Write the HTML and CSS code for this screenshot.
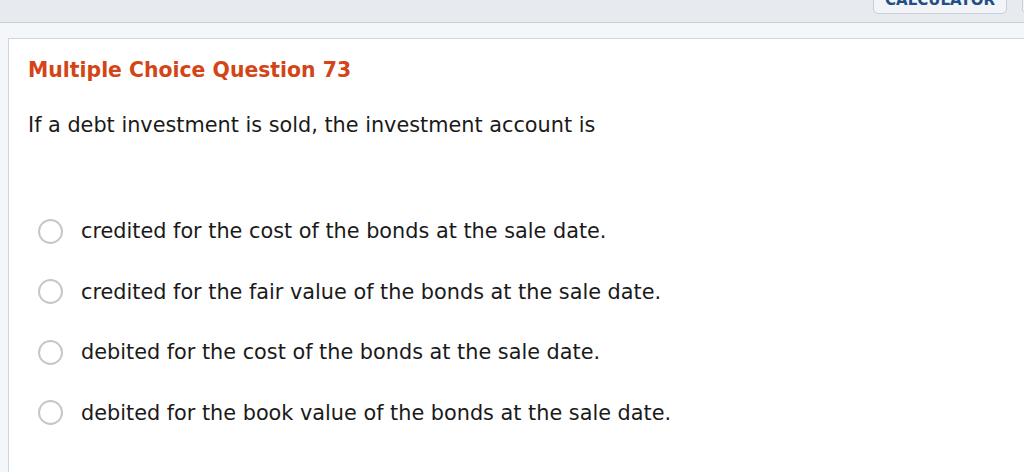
FILE: index.html
```html
<html>
<head>
	<title>Multiple Choice Question 73</title>
	<link rel="stylesheet" href="styles.css">
</head>
<body>
<div class="topbar">
	<span class="tool">CALCULATOR</span>
	<span class="tool"></span>
</div>
<div class="strip">
<div class="panel">
	<h2 class="qtitle">Multiple Choice Question 73</h2>
	<p class="prompt">If a debt investment is sold, the investment account is</p>
	<ul class="choices">
		<li><span class="radio"></span><span>credited for the cost of the bonds at the sale date.</span></li>
		<li><span class="radio"></span><span>credited for the fair value of the bonds at the sale date.</span></li>
		<li><span class="radio"></span><span>debited for the cost of the bonds at the sale date.</span></li>
		<li><span class="radio"></span><span>debited for the book value of the bonds at the sale date.</span></li>
	</ul>
</div>
</div>
</body>
</html>
```

FILE: styles.css
```css
body {
	margin: 0;
	background-color: #f4f7fa;
	font-family: "DejaVu Sans", Verdana, sans-serif;
	color: #1a1a1a;
	overflow: hidden;
}
div, p, ul, h1, h2, h3 { margin: 0; padding: 0; }

.topbar {
	height: 22px;
	background-color: #e7ebef;
	border-bottom: 1px solid #c9d0d8;
	display: flex;
	gap: 15px;
	padding-left: 873px;
	overflow: hidden;
}
.tool {
	flex: none;
	width: 134px;
	height: 25px;
	margin-top: -11px;
	border: 1px solid #c6ced7;
	border-radius: 5px;
	background-color: #f2f4f7;
	color: #1f4f86;
	font-weight: bold;
	font-size: 15px;
	line-height: 21px;
	text-align: center;
	box-sizing: border-box;
}

.strip {
	padding: 15px 0 0 8px;
}
.panel {
	background-color: #fff;
	border: 1px solid #cfd6df;
	border-right: none;
	border-bottom: none;
	height: 434px;
	box-sizing: border-box;
	padding: 17px 0 0 19px;
}
.qtitle {
	font-size: 20.4px;
	font-weight: bold;
	color: #d34517;
	line-height: 28px;
}
.prompt {
	font-size: 20.8px;
	line-height: 28px;
	margin-top: 27px;
}
.choices {
	list-style: none;
	margin-top: 62px;
	padding-left: 10px;
}
.choices li {
	display: flex;
	align-items: center;
	gap: 18px;
	font-size: 20.8px;
	height: 60.5px;
}
.radio {
	flex: none;
	width: 21px;
	height: 21px;
	border: 2px solid #c7c7c7;
	border-radius: 50%;
	background: #fff;
}
```
